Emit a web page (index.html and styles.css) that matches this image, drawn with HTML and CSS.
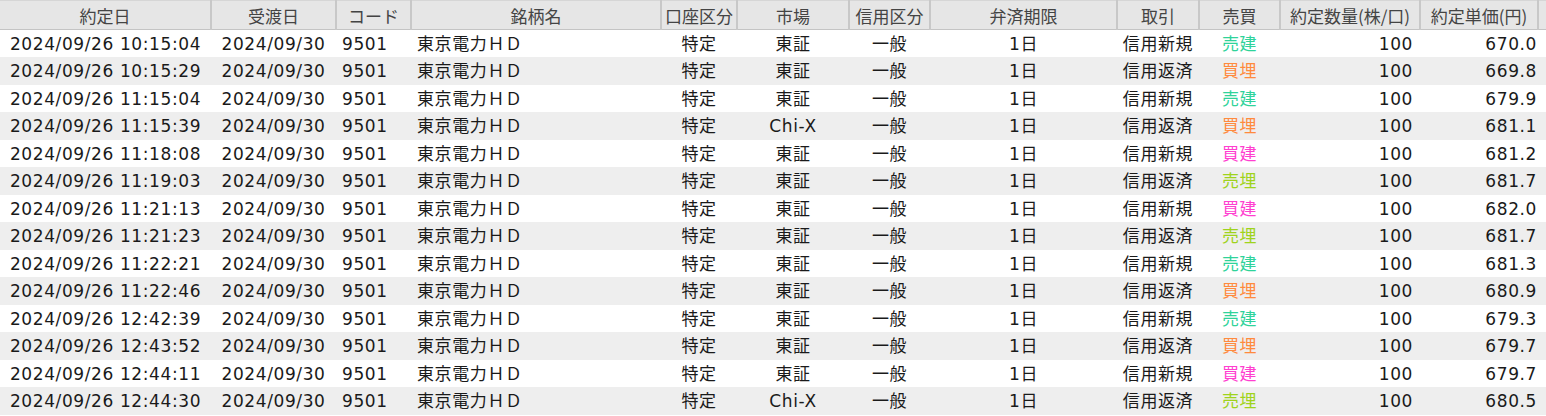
FILE: index.html
```html
<!DOCTYPE html>
<html lang="ja">
<head>
<meta charset="utf-8">
<title>約定一覧</title>
<link rel="stylesheet" href="styles.css">
</head>
<body>
<table class="grid">
  <colgroup>
    <col class="c-date"><col class="c-settle"><col class="c-code"><col class="c-name"><col class="c-acct"><col class="c-mkt"><col class="c-credit"><col class="c-term"><col class="c-trade"><col class="c-side"><col class="c-qty"><col class="c-price"><col class="c-fill">
  </colgroup>
  <thead>
    <tr>
      <th>約定日</th><th>受渡日</th><th>コード</th><th>銘柄名</th><th>口座区分</th><th>市場</th><th>信用区分</th><th>弁済期限</th><th>取引</th><th>売買</th><th>約定数量(株/口)</th><th>約定単価(円)</th><th class="fill"></th>
    </tr>
  </thead>
  <tbody>
    <tr><td class="ctr">2024/09/26 10:15:04</td><td class="ctr">2024/09/30</td><td class="lft">9501</td><td class="lft">東京電力ＨＤ</td><td class="ctr">特定</td><td class="ctr">東証</td><td class="ctr">一般</td><td class="ctr">1日</td><td class="ctr">信用新規</td><td class="ctr sell-new">売建</td><td class="rgt">100</td><td class="rgt tight">670.0</td><td></td></tr>
    <tr><td class="ctr">2024/09/26 10:15:29</td><td class="ctr">2024/09/30</td><td class="lft">9501</td><td class="lft">東京電力ＨＤ</td><td class="ctr">特定</td><td class="ctr">東証</td><td class="ctr">一般</td><td class="ctr">1日</td><td class="ctr">信用返済</td><td class="ctr buy-close">買埋</td><td class="rgt">100</td><td class="rgt tight">669.8</td><td></td></tr>
    <tr><td class="ctr">2024/09/26 11:15:04</td><td class="ctr">2024/09/30</td><td class="lft">9501</td><td class="lft">東京電力ＨＤ</td><td class="ctr">特定</td><td class="ctr">東証</td><td class="ctr">一般</td><td class="ctr">1日</td><td class="ctr">信用新規</td><td class="ctr sell-new">売建</td><td class="rgt">100</td><td class="rgt tight">679.9</td><td></td></tr>
    <tr><td class="ctr">2024/09/26 11:15:39</td><td class="ctr">2024/09/30</td><td class="lft">9501</td><td class="lft">東京電力ＨＤ</td><td class="ctr">特定</td><td class="ctr">Chi-X</td><td class="ctr">一般</td><td class="ctr">1日</td><td class="ctr">信用返済</td><td class="ctr buy-close">買埋</td><td class="rgt">100</td><td class="rgt tight">681.1</td><td></td></tr>
    <tr><td class="ctr">2024/09/26 11:18:08</td><td class="ctr">2024/09/30</td><td class="lft">9501</td><td class="lft">東京電力ＨＤ</td><td class="ctr">特定</td><td class="ctr">東証</td><td class="ctr">一般</td><td class="ctr">1日</td><td class="ctr">信用新規</td><td class="ctr buy-new">買建</td><td class="rgt">100</td><td class="rgt tight">681.2</td><td></td></tr>
    <tr><td class="ctr">2024/09/26 11:19:03</td><td class="ctr">2024/09/30</td><td class="lft">9501</td><td class="lft">東京電力ＨＤ</td><td class="ctr">特定</td><td class="ctr">東証</td><td class="ctr">一般</td><td class="ctr">1日</td><td class="ctr">信用返済</td><td class="ctr sell-close">売埋</td><td class="rgt">100</td><td class="rgt tight">681.7</td><td></td></tr>
    <tr><td class="ctr">2024/09/26 11:21:13</td><td class="ctr">2024/09/30</td><td class="lft">9501</td><td class="lft">東京電力ＨＤ</td><td class="ctr">特定</td><td class="ctr">東証</td><td class="ctr">一般</td><td class="ctr">1日</td><td class="ctr">信用新規</td><td class="ctr buy-new">買建</td><td class="rgt">100</td><td class="rgt tight">682.0</td><td></td></tr>
    <tr><td class="ctr">2024/09/26 11:21:23</td><td class="ctr">2024/09/30</td><td class="lft">9501</td><td class="lft">東京電力ＨＤ</td><td class="ctr">特定</td><td class="ctr">東証</td><td class="ctr">一般</td><td class="ctr">1日</td><td class="ctr">信用返済</td><td class="ctr sell-close">売埋</td><td class="rgt">100</td><td class="rgt tight">681.7</td><td></td></tr>
    <tr><td class="ctr">2024/09/26 11:22:21</td><td class="ctr">2024/09/30</td><td class="lft">9501</td><td class="lft">東京電力ＨＤ</td><td class="ctr">特定</td><td class="ctr">東証</td><td class="ctr">一般</td><td class="ctr">1日</td><td class="ctr">信用新規</td><td class="ctr sell-new">売建</td><td class="rgt">100</td><td class="rgt tight">681.3</td><td></td></tr>
    <tr><td class="ctr">2024/09/26 11:22:46</td><td class="ctr">2024/09/30</td><td class="lft">9501</td><td class="lft">東京電力ＨＤ</td><td class="ctr">特定</td><td class="ctr">東証</td><td class="ctr">一般</td><td class="ctr">1日</td><td class="ctr">信用返済</td><td class="ctr buy-close">買埋</td><td class="rgt">100</td><td class="rgt tight">680.9</td><td></td></tr>
    <tr><td class="ctr">2024/09/26 12:42:39</td><td class="ctr">2024/09/30</td><td class="lft">9501</td><td class="lft">東京電力ＨＤ</td><td class="ctr">特定</td><td class="ctr">東証</td><td class="ctr">一般</td><td class="ctr">1日</td><td class="ctr">信用新規</td><td class="ctr sell-new">売建</td><td class="rgt">100</td><td class="rgt tight">679.3</td><td></td></tr>
    <tr><td class="ctr">2024/09/26 12:43:52</td><td class="ctr">2024/09/30</td><td class="lft">9501</td><td class="lft">東京電力ＨＤ</td><td class="ctr">特定</td><td class="ctr">東証</td><td class="ctr">一般</td><td class="ctr">1日</td><td class="ctr">信用返済</td><td class="ctr buy-close">買埋</td><td class="rgt">100</td><td class="rgt tight">679.7</td><td></td></tr>
    <tr><td class="ctr">2024/09/26 12:44:11</td><td class="ctr">2024/09/30</td><td class="lft">9501</td><td class="lft">東京電力ＨＤ</td><td class="ctr">特定</td><td class="ctr">東証</td><td class="ctr">一般</td><td class="ctr">1日</td><td class="ctr">信用新規</td><td class="ctr buy-new">買建</td><td class="rgt">100</td><td class="rgt tight">679.7</td><td></td></tr>
    <tr><td class="ctr">2024/09/26 12:44:30</td><td class="ctr">2024/09/30</td><td class="lft">9501</td><td class="lft">東京電力ＨＤ</td><td class="ctr">特定</td><td class="ctr">Chi-X</td><td class="ctr">一般</td><td class="ctr">1日</td><td class="ctr">信用返済</td><td class="ctr sell-close">売埋</td><td class="rgt">100</td><td class="rgt tight">680.5</td><td></td></tr>
  </tbody>
</table>
</body>
</html>
```

FILE: styles.css
```css
html, body {
  margin: 0;
  padding: 0;
  background: #ffffff;
}

body {
  font-family: "DejaVu Sans", "Noto Sans CJK JP", sans-serif;
  font-size: 17px;
  color: #1a1a1a;
}

.grid {
  border-collapse: collapse;
  table-layout: fixed;
  width: 1546px;
}

.c-date { width: 211px; }
.c-settle { width: 125px; }
.c-code { width: 75px; }
.c-name { width: 250px; }
.c-acct { width: 76px; }
.c-mkt { width: 112px; }
.c-credit { width: 81px; }
.c-term { width: 187px; }
.c-trade { width: 82px; }
.c-side { width: 81px; }
.c-qty { width: 140px; }
.c-price { width: 118px; }
.c-fill { width: 8px; }

.grid thead tr {
  height: 29px;
}

.grid th {
  height: 29px;
  padding: 0;
  background: #e6e6e6;
  color: #444444;
  font-weight: normal;
  font-family: "Noto Sans CJK JP", sans-serif;
  font-size: 17px;
  text-align: center;
  white-space: nowrap;
  overflow: hidden;
  border-top: 1px solid #d6d6d6;
  border-bottom: 1px solid #c4c4c4;
  border-right: 2px solid #c8c8c8;
  box-sizing: border-box;
  line-height: 27px;
}

.grid th.fill {
  border-right: none;
}

.grid tbody tr {
  height: 27.5px;
}

.grid td {
  padding: 2px 0 0 0;
  white-space: nowrap;
  overflow: hidden;
  line-height: 25px;
  letter-spacing: 0.6px;
}

.grid tbody tr:nth-child(even) td {
  background: #eeeeee;
}

.ctr { text-align: center; }
.lft { text-align: left; padding-left: 6px !important; }
.rgt { text-align: right; padding-right: 7px !important; }
.rgt.tight { padding-right: 1px !important; }

.sell-new { color: #2fd39a; }
.buy-close { color: #ff8a3d; }
.buy-new { color: #ff3fd0; }
.sell-close { color: #9fd31c; }
```
